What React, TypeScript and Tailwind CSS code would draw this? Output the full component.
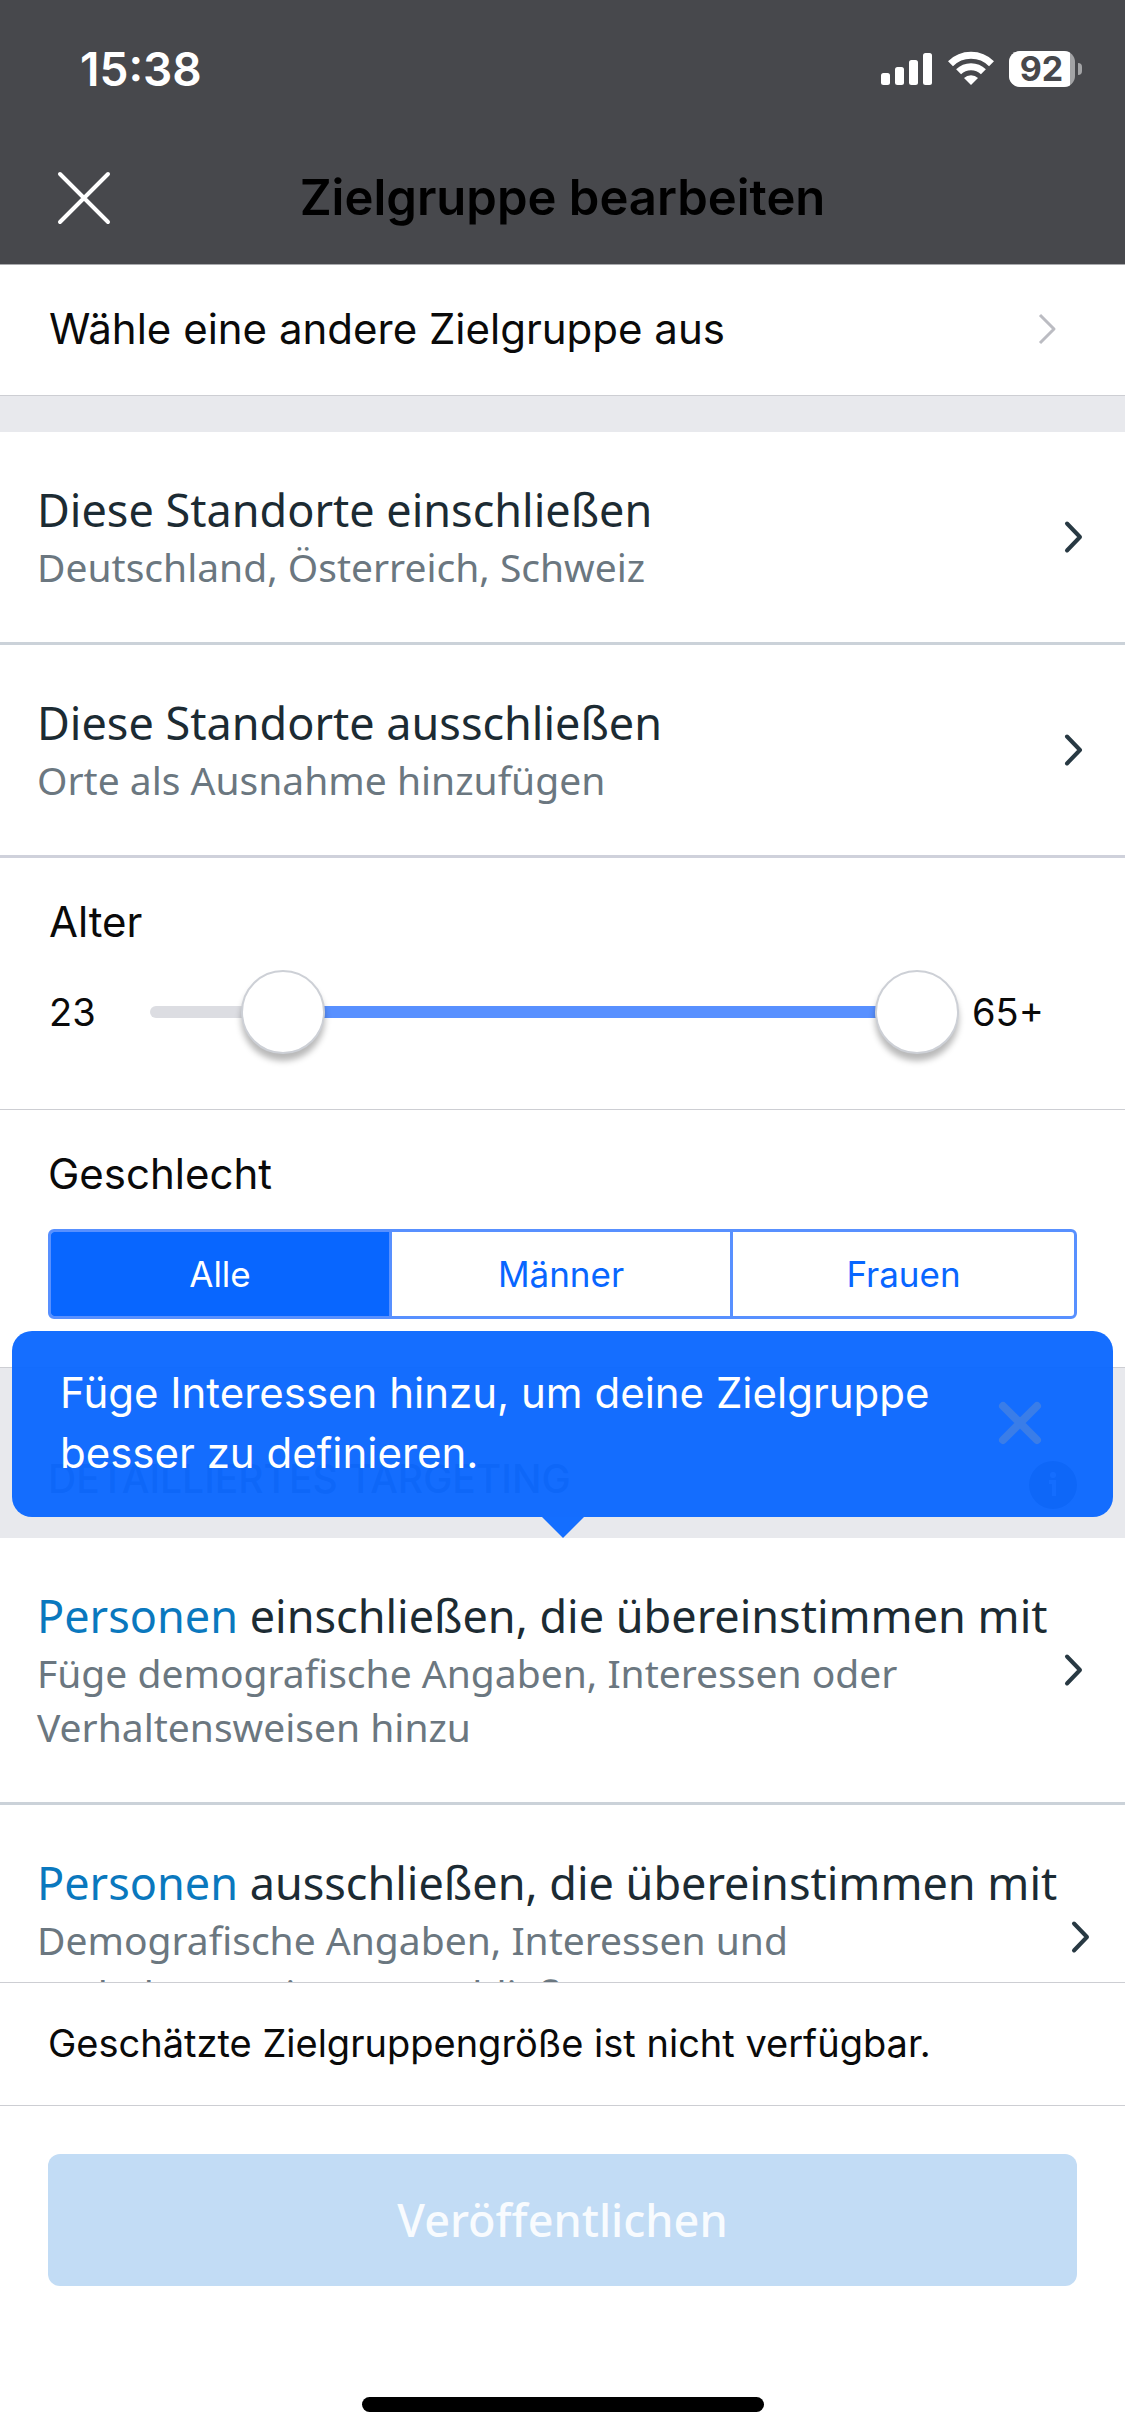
import { useId, useState } from 'react';
import type { ReactNode } from 'react';

const SYSTEM_FONT = 'font-[Inter,"Liberation_Sans",sans-serif]';
const BRAND_FONT = 'font-["Noto_Sans","Open_Sans",sans-serif]';

const AGE_MIN = 17;
const AGE_MAX = 65;

const StatusBar = () => (
  <div className="flex items-center justify-between pl-20 pr-[43px] pt-[42px] text-white">
    <span className="text-[46px] leading-[54px] font-semibold">15:38</span>
    <div className="flex items-center gap-[15px]">
      <svg width="52" height="36" viewBox="0 0 52 36" fill="currentColor" aria-hidden="true">
        <rect x="0" y="22" width="9" height="12" rx="2.5" />
        <rect x="14" y="16" width="9" height="18" rx="2.5" />
        <rect x="28" y="9" width="9" height="25" rx="2.5" />
        <rect x="42" y="2" width="9" height="32" rx="2.5" />
      </svg>
      <svg width="46" height="36" viewBox="0 0 46 36" aria-hidden="true">
        <g fill="none" stroke="currentColor" strokeWidth="7">
          <path d="M2.5 12.7 A29 29 0 0 1 43.5 12.7" />
          <path d="M10.6 20.8 A17.5 17.5 0 0 1 35.4 20.8" />
        </g>
        <path d="M23 34 L16 27 A10 10 0 0 1 30 27 Z" fill="currentColor" />
      </svg>
      <div className="flex items-center gap-[3px]">
        <div className="flex h-9 w-[66px] items-center overflow-hidden rounded-[11px] bg-white/50">
          <div className="flex h-full w-[61px] items-center justify-center bg-white pl-1 text-[34px] leading-9 font-bold text-[#47484c]">
            92
          </div>
        </div>
        <div className="h-3 w-1 rounded-r-full bg-white/50" />
      </div>
    </div>
  </div>
);

const Chevron = () => (
  <svg className="shrink-0" width="20" height="34" viewBox="0 0 20 34" fill="none" aria-hidden="true">
    <path
      d="M3 3.5 L16 17 L3 30.5"
      stroke="#283943"
      strokeWidth="4"
      strokeLinecap="round"
      strokeLinejoin="round"
    />
  </svg>
);

type RowProps = {
  title: ReactNode;
  subtitle: string;
  border?: string;
  wide?: boolean;
};

const TargetingRow = ({ title, subtitle, border = 'border-[#cbd2d9]', wide }: RowProps) => (
  <button
    type="button"
    className={`${BRAND_FONT} ${border} ${wide ? 'pr-[34px]' : 'pr-[41px]'} flex w-full shrink-0 items-center justify-between border-b-3 bg-white py-12 pl-[37px] text-left`}
  >
    <span className="flex min-w-0 flex-1 flex-col">
      <span className="text-[45px] leading-[60px] whitespace-nowrap text-[#1c2b33]">{title}</span>
      <span className="max-w-[900px] text-[39px] leading-[54px] text-[#6b7780]">{subtitle}</span>
    </span>
    <Chevron />
  </button>
);

const THUMB =
  'pointer-events-none absolute inset-0 h-[84px] w-full appearance-none bg-transparent [&::-webkit-slider-thumb]:pointer-events-auto [&::-webkit-slider-thumb]:size-[84px] [&::-webkit-slider-thumb]:appearance-none [&::-webkit-slider-thumb]:rounded-full [&::-webkit-slider-thumb]:border-2 [&::-webkit-slider-thumb]:border-[#cdd0d6] [&::-webkit-slider-thumb]:bg-white [&::-webkit-slider-thumb]:shadow-[0_7px_6px_rgba(0,0,0,0.28)]';

const AgeSlider = () => {
  const [from, setFrom] = useState(23);
  const [to, setTo] = useState(65);
  const percent = (age: number) => ((age - AGE_MIN) / (AGE_MAX - AGE_MIN)) * 100;

  return (
    <div className="flex items-center text-[38px] leading-[48px]">
      <span className="w-[101px]">{from}</span>
      <div className="relative h-[84px] flex-1">
        <div className="flex h-full items-center">
          <div className="h-3 w-full rounded-full bg-[#dcdde2] px-[42px]">
            <div
              className="h-full bg-[#5890ff]"
              style={{ marginLeft: `${percent(from)}%`, marginRight: `${100 - percent(to)}%` }}
            />
          </div>
        </div>
        <input
          type="range"
          aria-label="Mindestalter"
          min={AGE_MIN}
          max={AGE_MAX}
          value={from}
          onChange={(e) => setFrom(Math.min(Number(e.target.value), to))}
          className={THUMB}
        />
        <input
          type="range"
          aria-label="Höchstalter"
          min={AGE_MIN}
          max={AGE_MAX}
          value={to}
          onChange={(e) => setTo(Math.max(Number(e.target.value), from))}
          className={THUMB}
        />
      </div>
      <span className="w-[117px] pl-[13px]">{to >= AGE_MAX ? '65+' : to}</span>
    </div>
  );
};

const GENDERS = ['Alle', 'Männer', 'Frauen'];

const GenderPicker = () => {
  const [gender, setGender] = useState('Alle');
  const name = useId();

  return (
    <div
      role="radiogroup"
      aria-label="Geschlecht"
      className="grid grid-cols-3 divide-x-3 divide-[#5890ff] overflow-hidden rounded-md border-3 border-[#5890ff]"
    >
      {GENDERS.map((option) => (
        <label
          key={option}
          className="cursor-pointer py-[18px] text-center text-[35px] leading-[48px] text-[#0866ff] has-checked:bg-[#0866ff] has-checked:text-white"
        >
          <input
            type="radio"
            name={name}
            className="sr-only"
            checked={gender === option}
            onChange={() => setGender(option)}
          />
          {option}
        </label>
      ))}
    </div>
  );
};

const Tooltip = () => (
  <div className="absolute inset-x-3 -top-[37px] bottom-[21px] flex items-center justify-between rounded-[20px] bg-[#0866ff]/95 pr-[70px] pb-[2px] pl-12 text-white">
    <p className="text-[42px] leading-[60px]">
      Füge Interessen hinzu, um deine Zielgruppe
      <br />
      besser zu definieren.
    </p>
    <button type="button" aria-label="Hinweis schließen">
      <svg width="46" height="46" viewBox="0 0 46 46" fill="none" aria-hidden="true">
        <path d="M6 6 L40 40 M40 6 L6 40" stroke="#3a7de8" strokeWidth="8" strokeLinecap="round" />
      </svg>
    </button>
    <svg
      className="absolute top-full left-1/2 -translate-x-1/2"
      width="42"
      height="21"
      viewBox="0 0 42 21"
      aria-hidden="true"
    >
      <path d="M0 0 H42 L21 21 Z" fill="#146eff" />
    </svg>
  </div>
);

export default function App() {
  return (
    <div className={`${SYSTEM_FONT} flex h-screen flex-col bg-white text-[#0a0a0a]`}>
      <header className="shrink-0 border-b border-[#a9aaad] bg-[#47484c]">
        <StatusBar />
        <div className="grid grid-cols-[1fr_auto_1fr] items-center pt-[72px] pb-9">
          <button type="button" aria-label="Schließen" className="justify-self-start pl-14">
            <svg width="56" height="56" viewBox="0 0 56 56" fill="none" aria-hidden="true">
              <path d="M4 4 L52 52 M52 4 L4 52" stroke="#fff" strokeWidth="4" strokeLinecap="round" />
            </svg>
          </button>
          <h1 className="text-[49px] leading-[60px] font-semibold text-black">Zielgruppe bearbeiten</h1>
        </div>
      </header>

      <main className="flex min-h-0 flex-1 flex-col overflow-y-auto [scrollbar-width:none]">
        <button
          type="button"
          className="flex shrink-0 items-center justify-between border-b border-[#cdced3] pt-[34px] pr-[68px] pb-9 pl-[49px] text-left text-[42px] leading-[60px]"
        >
          Wähle eine andere Zielgruppe aus
          <svg width="20" height="34" viewBox="0 0 20 34" fill="none" aria-hidden="true">
            <path d="M3 3 L17 17 L3 31" stroke="#bbbcc2" strokeWidth="3" strokeLinejoin="round" />
          </svg>
        </button>
        <div className="h-9 shrink-0 bg-[#e8e9ed]" />

        <TargetingRow title="Diese Standorte einschließen" subtitle="Deutschland, Österreich, Schweiz" />
        <TargetingRow
          title="Diese Standorte ausschließen"
          subtitle="Orte als Ausnahme hinzufügen"
          border="border-[#cfd1db]"
        />

        <section className="shrink-0 border-b border-[#cdced3] px-[49px] pt-[34px] pb-[55px]">
          <h2 className="mb-[18px] text-[42px] leading-[60px]">Alter</h2>
          <AgeSlider />
        </section>

        <section className="shrink-0 border-b border-[#cdced3] px-12 pt-[34px] pb-12">
          <h2 className="mb-[25px] text-[42px] leading-[60px]">Geschlecht</h2>
          <GenderPicker />
        </section>

        <section className="relative shrink-0 bg-[#e8e9ed]">
          <div className="flex h-[170px] items-end justify-between pr-12 pb-[29px] pl-12 text-[#6f7378]">
            <h2 className="text-[39px] leading-[60px] font-medium">DETAILLIERTES TARGETING</h2>
            <svg width="48" height="48" viewBox="0 0 48 48" aria-hidden="true">
              <circle cx="24" cy="24" r="24" fill="currentColor" />
              <circle cx="24" cy="14" r="3" fill="#e8e9ed" />
              <path d="M20 21 h5 v14" fill="none" stroke="#e8e9ed" strokeWidth="4" />
            </svg>
          </div>
          <Tooltip />
        </section>

        <TargetingRow
          title={
            <>
              <span className="text-[#0a78be]">Personen</span> einschließen, die übereinstimmen mit
            </>
          }
          subtitle="Füge demografische Angaben, Interessen oder Verhaltensweisen hinzu"
        />
        <TargetingRow
          title={
            <>
              <span className="text-[#0a78be]">Personen</span> ausschließen, die übereinstimmen mit
            </>
          }
          subtitle="Demografische Angaben, Interessen und Verhaltensweisen ausschließen"
          wide
        />
      </main>

      <footer className="shrink-0">
        <p className="border-y border-[#cdced3] px-12 pt-[33px] pb-[35px] text-[38px] leading-[54px]">
          Geschätzte Zielgruppengröße ist nicht verfügbar.
        </p>
        <div className="px-12 pt-12">
          <button
            type="button"
            disabled
            className={`${BRAND_FONT} w-full rounded-xl bg-[#c2dcf5] py-9 text-[45px] leading-[60px] font-medium text-[#f8fbfe]`}
          >
            Veröffentlichen
          </button>
        </div>
        <div className="mx-auto mt-[111px] mb-6 h-[15px] w-[402px] rounded-full bg-black" />
      </footer>
    </div>
  );
}
